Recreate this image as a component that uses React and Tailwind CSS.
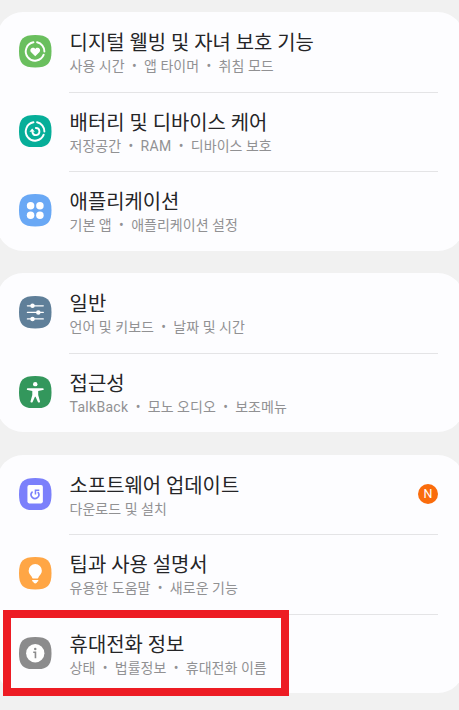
import React from "react";

const IconTile = ({ color, children }) => (
  <svg viewBox="0 0 32 32" className="w-[32.5px] h-[32.5px] shrink-0 -mt-[0.5px]" fill="none">
    <path d="M16 0C28 0 32 4 32 16S28 32 16 32 0 28 0 16 4 0 16 0Z" fill={color} />
    {children}
  </svg>
);

// open ring shared by the wellbeing and device care icons
const Ring = () => (
  <g stroke="#fff" strokeWidth="1.9" strokeLinecap="round">
    <path d="M14.2 7.2A9.1 9.1 0 1 0 24.3 19.4" />
    <path d="M17.8 7.2A9.1 9.1 0 0 1 25 16.3" />
  </g>
);

const WellbeingIcon = () => (
  <IconTile color="#6abf5e">
    <Ring />
    <path
      d="M16 20.8L12 16.9C10.6 15.5 11.1 12.8 13.3 12.5C14.6 12.3 15.5 12.8 16 13.7C16.5 12.8 17.4 12.3 18.7 12.5C20.9 12.8 21.4 15.5 20 16.9Z"
      fill="#fff"
    />
  </IconTile>
);

const DeviceCareIcon = () => (
  <IconTile color="#06ae99">
    <Ring />
    <path d="M16.6 12.8A3.5 3.5 0 1 1 13.2 17" stroke="#fff" strokeWidth="1.8" strokeLinecap="round" />
    <path d="M10.3 16.4L13 13.2L15.6 16.4Z" fill="#fff" />
  </IconTile>
);

const AppsIcon = () => (
  <IconTile color="#69a8f5">
    <g fill="#fff">
      <circle cx="11.4" cy="11.5" r="3.7" />
      <circle cx="20.6" cy="11.5" r="3.7" />
      <circle cx="11.4" cy="20.9" r="3.7" />
      <circle cx="20.6" cy="20.9" r="3.7" />
    </g>
  </IconTile>
);

const GeneralIcon = () => (
  <IconTile color="#5f7f99">
    <path d="M8.3 9.7H23.9M8.3 16.2H23.9M8.3 22.6H23.9" stroke="#fff" strokeWidth="1.3" strokeLinecap="round" />
    <g fill="#fff">
      <circle cx="13.3" cy="9.7" r="2.2" />
      <circle cx="19" cy="16.2" r="2.2" />
      <circle cx="13.3" cy="22.6" r="2.2" />
    </g>
  </IconTile>
);

const AccessibilityIcon = () => (
  <IconTile color="#33975c">
    <g fill="#fff">
      <circle cx="16" cy="8" r="2.2" />
      <path d="M8.5 12.1H23.5Q24.3 12.1 24.3 13T23.5 13.9L18.9 14.8V18.6L20.7 25Q20.8 25.9 19.9 26.1T18.6 25.6L16.3 20.5H15.7L13.4 25.6Q13 26.3 12.1 26.1T11.3 25L13.1 18.6V14.8L8.5 13.9Q7.7 13.8 7.7 13T8.5 12.1Z" />
    </g>
  </IconTile>
);

const UpdateIcon = () => (
  <IconTile color="#7b80fb">
    <rect x="8.3" y="7" width="15.2" height="18" rx="1.8" fill="#fff" />
    <path d="M12.9 13.9A3.8 3.8 0 1 0 18.9 14.3" stroke="#7b80fb" strokeWidth="1.6" strokeLinecap="round" />
    <path d="M20 12H16.2V16.2" stroke="#7b80fb" strokeWidth="1.5" />
  </IconTile>
);

const TipsIcon = () => (
  <IconTile color="#ffa645">
    <g fill="#fff">
      <path d="M16 7A6.5 6.5 0 0 1 22.5 13.5C22.5 16.3 20.8 17.4 19.6 19.1C19 20 19.1 21.1 18.3 21.1H13.7C12.9 21.1 13 20 12.4 19.1C11.2 17.4 9.5 16.3 9.5 13.5A6.5 6.5 0 0 1 16 7Z" />
      <path d="M13 22.6H19V23.6Q18.7 24.3 18 24.4Q17.5 26 16 26T14 24.4Q13.3 24.3 13 23.6Z" />
    </g>
  </IconTile>
);

const InfoIcon = () => (
  <IconTile color="#8b8b8c">
    <circle cx="16" cy="16" r="9" fill="#fff" />
    <circle cx="16" cy="11.8" r="1.2" fill="#8b8b8c" />
    <path d="M14 15H16.2V21" stroke="#8b8b8c" strokeWidth="1.6" />
  </IconTile>
);

const groups = [
  [
    { icon: WellbeingIcon, title: "디지털 웰빙 및 자녀 보호 기능", items: ["사용 시간", "앱 타이머", "취침 모드"] },
    { icon: DeviceCareIcon, title: "배터리 및 디바이스 케어", items: ["저장공간", "RAM", "디바이스 보호"] },
    { icon: AppsIcon, title: "애플리케이션", items: ["기본 앱", "애플리케이션 설정"] },
  ],
  [
    { icon: GeneralIcon, title: "일반", items: ["언어 및 키보드", "날짜 및 시간"] },
    { icon: AccessibilityIcon, title: "접근성", items: ["TalkBack", "모노 오디오", "보조메뉴"] },
  ],
  [
    { icon: UpdateIcon, title: "소프트웨어 업데이트", items: ["다운로드 및 설치"], badge: "N" },
    { icon: TipsIcon, title: "팁과 사용 설명서", items: ["유용한 도움말", "새로운 기능"] },
    { icon: InfoIcon, title: "휴대전화 정보", items: ["상태", "법률정보", "휴대전화 이름"], highlighted: true },
  ],
];

const SettingsRow = ({ icon: Icon, title, items, badge, highlighted, divider }) => (
  <div className="relative flex items-center h-[79.5px] pl-[22px] pr-[26px]">
    <Icon />
    <div
      className={`ml-[17.5px] flex-1 h-full flex items-center justify-between border-t ${
        divider ? "border-[#e4e4e6]" : "border-transparent"
      }`}
    >
      <div className="pt-[4.3px] whitespace-nowrap">
        <h3 className="pl-[0.6px] text-[19.9px] leading-[24px] text-[#252527]">{title}</h3>
        <p className="flex pl-[0.5px] text-[14px] leading-[20px] text-[#919193]">
          {items.map((item, i) => (
            <React.Fragment key={item}>
              {i > 0 && <span className="w-[19.4px] text-center">•</span>}
              <span className={/[A-Z]/.test(item) ? "tracking-[0.3px]" : "tracking-[0.03px]"}>{item}</span>
            </React.Fragment>
          ))}
        </p>
      </div>
      {badge && (
        <span className="w-5 h-5 -mt-px rounded-full bg-[#fa6c0c] text-white text-[12.5px] leading-[19px] text-center">
          {badge}
        </span>
      )}
    </div>
    {highlighted && (
      <div className="absolute left-[6px] top-[-4px] w-[286px] h-[86px] border-8 border-[#ed1c24]" />
    )}
  </div>
);

export default function App() {
  return (
    <main className="w-[459px] h-[710px] overflow-hidden bg-[#f1f1f1] pt-3 flex flex-col gap-[22.5px] font-[Roboto,'Noto_Sans_CJK_KR',sans-serif]">
      {groups.map((rows, i) => (
        <section key={i} className="-ml-[3px] w-[467px] shrink-0 rounded-[26px] bg-[#fdfdff]">
          {rows.map((row, j) => (
            <SettingsRow key={row.title} {...row} divider={j > 0} />
          ))}
        </section>
      ))}
    </main>
  );
}
